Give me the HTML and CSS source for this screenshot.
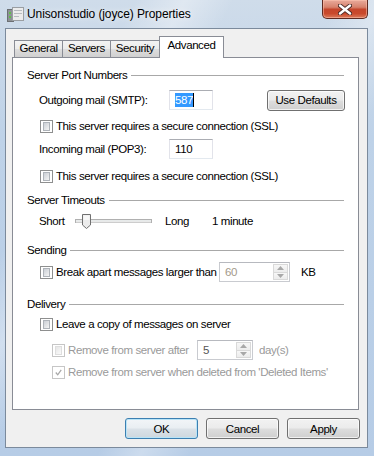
FILE: index.html
```html
<!DOCTYPE html>
<html>
  <head>
    <title>Unisonstudio (joyce) Properties</title>
    <link rel="stylesheet" href="styles.css">
  </head>
  <body>
    <div class="window">
      <div class="titlebar">
        <svg class="app-icon" width="17" height="17" viewBox="0 0 17 17">
          <rect x="0.5" y="3.5" width="6" height="12" fill="#8e9296" stroke="#6c7074"/>
          <rect x="5.5" y="1.5" width="11" height="13" fill="#ececec" stroke="#9a9ea2"/>
          <rect x="7" y="4" width="8" height="1" fill="#b8bcc0"/>
          <rect x="7" y="7" width="8" height="1" fill="#b8bcc0"/>
          <rect x="7" y="10" width="5" height="1" fill="#b8bcc0"/>
          <rect x="2" y="6" width="2" height="2" fill="#5fbf4a"/>
          <rect x="2" y="10" width="2" height="2" fill="#5fbf4a"/>
        </svg>
        <span class="title">Unisonstudio (joyce) Properties</span>
        <div class="close-btn">
          <svg width="14" height="11" viewBox="0 0 14 11">
            <path d="M2 1.5 L12 9.5 M12 1.5 L2 9.5" stroke="#4a2a26" stroke-width="4.2" stroke-linecap="round"/>
            <path d="M2 1.5 L12 9.5 M12 1.5 L2 9.5" stroke="#ffffff" stroke-width="2.4" stroke-linecap="round"/>
          </svg>
        </div>
      </div>

      <div class="client">
        <div class="tabs">
          <div class="tab t-general">General</div>
          <div class="tab t-servers">Servers</div>
          <div class="tab t-security">Security</div>
          <div class="tab t-advanced active">Advanced</div>
        </div>

        <div class="page">
          <div class="group">Server Port Numbers</div>
          <div class="row r-smtp">
            <span class="label port-label">Outgoing mail (SMTP):</span>
            <span class="textbox"><span class="sel">587</span><span class="caret"></span></span>
            <span class="btn defaults">Use Defaults</span>
          </div>
          <div class="row r-ssl1">
            <span class="check"></span>
            <span>This server requires a secure connection (SSL)</span>
          </div>
          <div class="row r-pop">
            <span class="label port-label">Incoming mail (POP3):</span>
            <span class="textbox">110</span>
          </div>
          <div class="row r-ssl2">
            <span class="check"></span>
            <span>This server requires a secure connection (SSL)</span>
          </div>

          <div class="group g-timeouts">Server Timeouts</div>
          <div class="row r-slider">
            <span class="short">Short</span>
            <svg class="slider" width="77" height="16" viewBox="0 0 77 16">
              <rect x="0.5" y="5.5" width="76" height="3" fill="#e7eaea" stroke="#b0b0b0"/>
              <line x1="1" y1="8" x2="76" y2="8" stroke="#e9e9e9"/>
              <path d="M7.5 0.5 H15.5 V11 L11.5 14.5 L7.5 11 Z" fill="#ececec" stroke="#707070"/>
              <path d="M8.5 1.5 H14.5 V6 H8.5 Z" fill="#f8f8f8"/>
            </svg>
            <span class="long">Long</span>
            <span>1 minute</span>
          </div>

          <div class="group g-sending">Sending</div>
          <div class="row r-break">
            <span class="check"></span>
            <span class="break-label">Break apart messages larger than</span>
            <span class="spin s-size">
              <span class="spin-val">60</span>
              <span class="spin-btns">
                <span class="spin-up"><svg width="7" height="4" viewBox="0 0 7 4"><path d="M0 4 L3.5 0 L7 4 Z" fill="#a8a8a8"/></svg></span>
                <span class="spin-down"><svg width="7" height="4" viewBox="0 0 7 4"><path d="M0 0 L3.5 4 L7 0 Z" fill="#a8a8a8"/></svg></span>
              </span>
            </span>
            <span class="unit">KB</span>
          </div>

          <div class="group g-delivery">Delivery</div>
          <div class="row r-leave">
            <span class="check"></span>
            <span>Leave a copy of messages on server</span>
          </div>
          <div class="row r-after disabled">
            <span class="check off"></span>
            <span class="after-label">Remove from server after</span>
            <span class="spin s-days">
              <span class="spin-val days-val">5</span>
              <span class="spin-btns">
                <span class="spin-up"><svg width="7" height="4" viewBox="0 0 7 4"><path d="M0 4 L3.5 0 L7 4 Z" fill="#a8a8a8"/></svg></span>
                <span class="spin-down"><svg width="7" height="4" viewBox="0 0 7 4"><path d="M0 0 L3.5 4 L7 0 Z" fill="#a8a8a8"/></svg></span>
              </span>
            </span>
            <span class="unit days">day(s)</span>
          </div>
          <div class="row r-deleted disabled">
            <span class="check off">
              <svg width="9" height="9" viewBox="0 0 9 9"><path d="M1 4.5 L3.5 7.5 L8 1" fill="none" stroke="#a7a7a7" stroke-width="1.6"/></svg>
            </span>
            <span>Remove from server when deleted from 'Deleted Items'</span>
          </div>
        </div>

        <div class="buttons">
          <span class="btn default">OK</span>
          <span class="btn">Cancel</span>
          <span class="btn">Apply</span>
        </div>
      </div>
    </div>
  </body>
</html>
```

FILE: styles.css
```css
* {
  box-sizing: border-box;
}

body {
  margin: 0;
  font-family: "Liberation Sans", Arial, sans-serif;
  font-size: 11.5px;
  letter-spacing: -0.4px;
  color: #000;
}

.window {
  width: 374px;
  height: 456px;
  display: flex;
  flex-direction: column;
  overflow: hidden;
  background:
    linear-gradient(118deg, rgba(255, 255, 255, 0) 22%, rgba(255, 255, 255, 0.35) 30%, rgba(255, 255, 255, 0) 38%),
    linear-gradient(118deg, rgba(255, 255, 255, 0) 55%, rgba(255, 255, 255, 0.3) 62%, rgba(255, 255, 255, 0) 70%),
    linear-gradient(180deg, #cfdcea 0%, #bed2e8 30%, #b6cce6 100%);
}

/* title bar */
.titlebar {
  height: 28px;
  flex-shrink: 0;
  display: flex;
  align-items: flex-start;
}

.app-icon {
  margin: 6px 0 0 7px;
}

.title {
  margin: 6px 0 0 3px;
  font-size: 12px;
  letter-spacing: -0.1px;
  line-height: 16px;
  text-shadow: 0 0 6px rgba(255, 255, 255, 0.9);
}

.close-btn {
  margin-left: auto;
  margin-right: 6px;
  width: 46px;
  height: 19px;
  display: flex;
  align-items: center;
  justify-content: center;
  border: 1px solid #5e2a22;
  border-top: none;
  border-radius: 0 0 5px 5px;
  background: linear-gradient(180deg, #e9ab9c 0%, #d7826d 40%, #c5462c 52%, #c9492c 75%, #db7a5c 100%);
  box-shadow: inset 0 0 0 1px rgba(255, 200, 180, 0.5);
}

/* client area */
.client {
  flex: 1;
  margin: 0 6px 8px 5px;
  border: 1px solid #7b8a9c;
  background: #f0f0f0;
  display: flex;
  flex-direction: column;
}

.tabs {
  display: flex;
  align-items: flex-end;
  height: 21px;
  margin: 7px 0 0 8px;
}

.tab {
  height: 17px;
  border: 1px solid #898c95;
  border-bottom: none;
  background: linear-gradient(180deg, #f3f3f3 0%, #ebebeb 50%, #dedede 50%, #d0d0d0 100%);
  text-align: center;
  line-height: 15px;
}

.tab + .tab {
  margin-left: -1px;
}

.t-general { width: 49px; }
.t-servers { width: 49px; }
.t-security { width: 50px; }

.tab.active {
  width: 65px;
  height: 22px;
  margin-bottom: -1px;
  background: #fff;
  line-height: 17px;
  position: relative;
  z-index: 1;
}

.page {
  width: 347px;
  height: 353px;
  margin-left: 6px;
  border: 1px solid #898c95;
  background: #fff;
  padding: 7px 14px 0 14px;
  white-space: nowrap;
}

.group {
  display: flex;
  align-items: center;
  height: 20px;
}

.group::after {
  content: "";
  flex: 1;
  height: 1px;
  margin-left: 4px;
  background: #a8a8a8;
}

.g-timeouts { margin-top: 4px; }
.g-sending { margin-top: 9px; }
.g-delivery { margin-top: 12px; }

.row {
  display: flex;
  align-items: center;
  height: 20px;
  padding-left: 12px;
}

.r-smtp { margin-top: 5px; }
.r-ssl1 { margin-top: 6px; }
.r-pop { margin-top: 3px; }
.r-ssl2 { margin-top: 7px; }
.r-slider { margin-top: 1px; }
.r-break { margin-top: 2px; }
.r-leave { margin-top: 0; }
.r-after { margin-top: 6px; padding-left: 24px; }
.r-deleted { margin-top: 2px; padding-left: 24px; }

.disabled {
  color: #9a9a9a;
}

.port-label {
  width: 130px;
  flex-shrink: 0;
}

.textbox {
  width: 44px;
  height: 20px;
  display: flex;
  align-items: center;
  padding-left: 5px;
  border: 1px solid #e2e3ea;
  border-top-color: #abadb3;
  border-bottom-color: #e3e9ef;
  background: #fff;
}

.sel {
  background: #3399ff;
  color: #fff;
  line-height: 14px;
}

.caret {
  width: 1px;
  height: 14px;
  background: #000;
}

.btn {
  width: 73px;
  height: 21px;
  flex-shrink: 0;
  display: flex;
  align-items: center;
  justify-content: center;
  border: 1px solid #707070;
  border-radius: 3px;
  background: linear-gradient(180deg, #f2f2f2 0%, #ebebeb 48%, #dddddd 52%, #cfcfcf 100%);
  box-shadow: inset 0 0 0 1px rgba(255, 255, 255, 0.7);
}

.btn.defaults {
  width: 78px;
  margin-left: auto;
  margin-right: -1px;
}

.btn.default {
  border-color: #3c7fb1;
  box-shadow: inset 0 0 0 1px #b9e4f7;
  background: linear-gradient(180deg, #f2f5f8 0%, #e9eef2 48%, #dbe2e8 52%, #ced7de 100%);
}

.check {
  width: 13px;
  height: 13px;
  flex-shrink: 0;
  margin: 0 3px 0 1px;
  border: 1px solid #8e8f8f;
  background: #fff;
  padding: 2px;
  display: flex;
  align-items: center;
  justify-content: center;
}

.check::before {
  content: "";
  width: 7px;
  height: 7px;
  border: 1px solid #aeb3b9;
  background: linear-gradient(135deg, #cbcfd5 0%, #f4f4f4 100%);
}

.check.off {
  border-color: #c6c6c6;
}

.check.off::before {
  border-color: #dedede;
  background: linear-gradient(135deg, #e6e6e6 0%, #fafafa 100%);
}

.r-deleted .check::before {
  display: none;
}

.short {
  width: 36px;
  flex-shrink: 0;
}

.slider {
  flex-shrink: 0;
  margin-top: 1px;
}

.long {
  width: 47px;
  flex-shrink: 0;
  margin-left: 13px;
}

.break-label {
  width: 163px;
  flex-shrink: 0;
}

.spin {
  height: 20px;
  flex-shrink: 0;
  display: flex;
  border: 1px solid #c9cbd0;
  border-top-color: #b7b9bf;
  background: #fff;
}

.s-size {
  width: 71px;
}

.s-days {
  width: 56px;
}

.spin-val {
  flex: 1;
  padding-left: 5px;
  line-height: 18px;
  color: #a39a8a;
}

.days-val {
  color: #555;
}

.spin-btns {
  width: 16px;
  display: flex;
  flex-direction: column;
  padding: 1px 1px 1px 0;
}

.spin-up,
.spin-down {
  flex: 1;
  display: flex;
  align-items: center;
  justify-content: center;
  border: 1px solid #d9d9d9;
  background: linear-gradient(180deg, #f7f7f7, #ececec);
}

.spin-down {
  border-top: none;
}

.unit {
  margin-left: 11px;
}

.after-label {
  width: 129px;
  flex-shrink: 0;
}

.days {
  margin-left: 6px;
}

.buttons {
  display: flex;
  justify-content: flex-end;
  gap: 8px;
  margin: 8px 7px 0 0;
}
```
